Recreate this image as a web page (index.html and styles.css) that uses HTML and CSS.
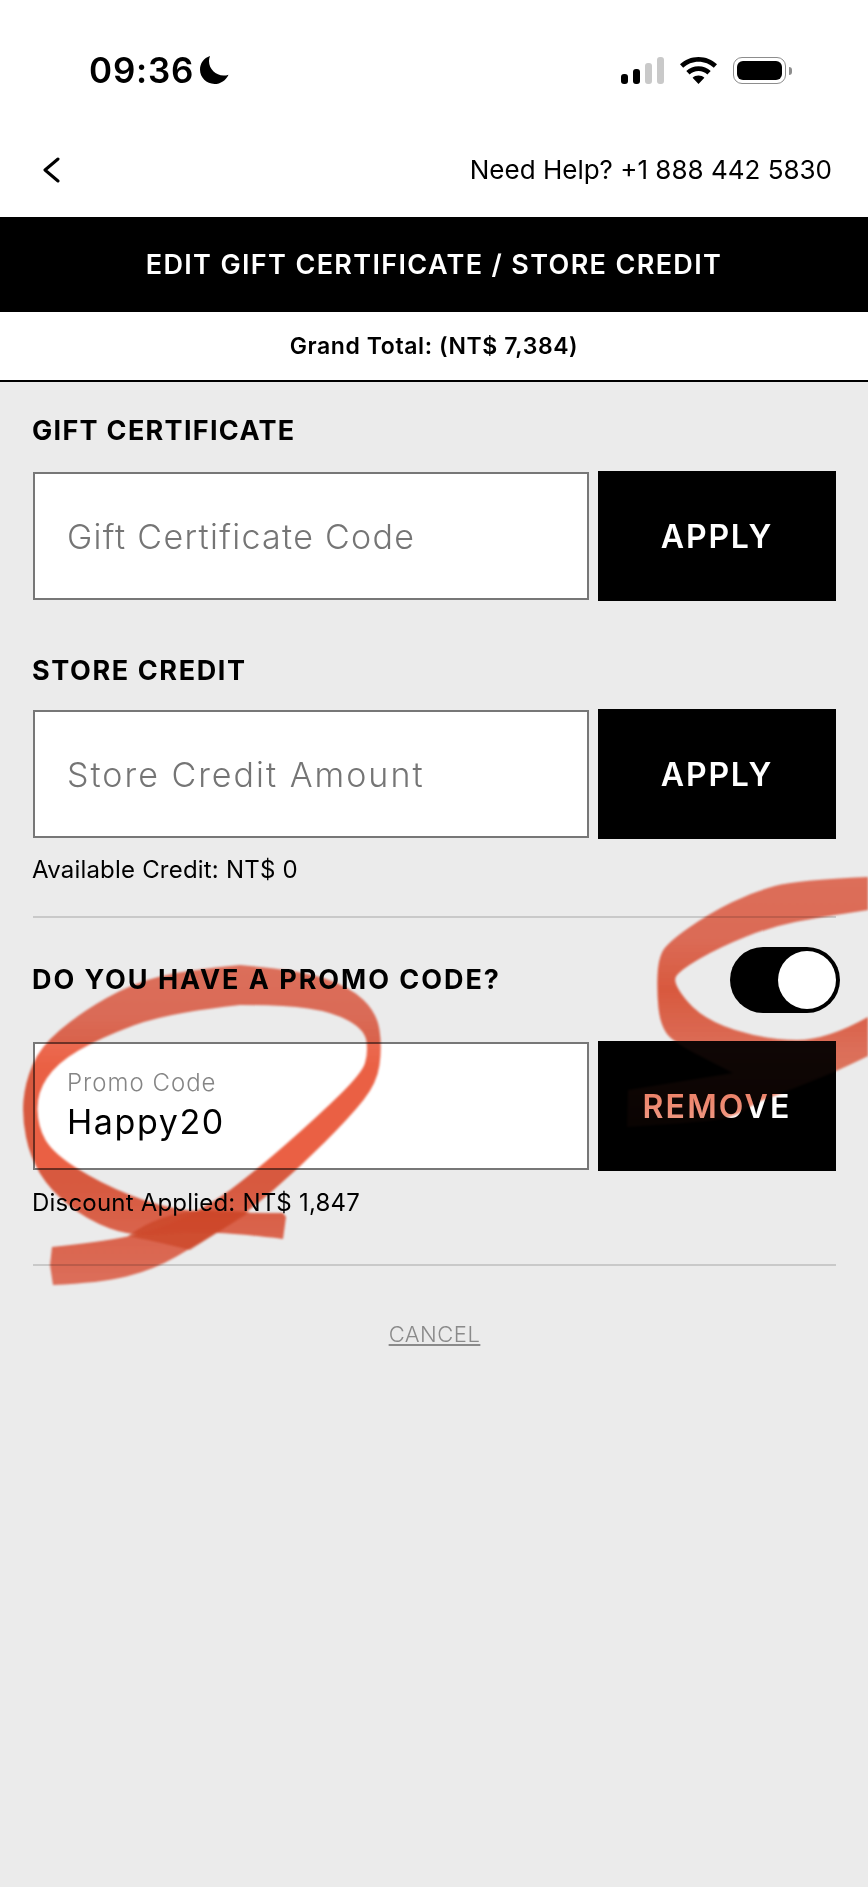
FILE: index.html
```html
<!DOCTYPE html>
<html lang="en">
<head>
  <meta charset="UTF-8" />
  <meta name="viewport" content="width=device-width, initial-scale=1.0"/>
  <title>Edit Gift Certificate / Store Credit</title>
  <link rel="stylesheet" href="styles.css">
</head>
<body>
  <div class="page">
    <div class="status-bar">
      <div class="status-left">
        <span class="clock">09:36</span>
        <svg class="moon" width="29" height="28" viewBox="0 0 29 28"><path d="M10 0C3.800 2 0 7.400 0 13.600 0 21.600 6.500 28 14.500 28c6 0 11.500-3.600 14-9.300-1.600.6-3.200.9-4.900.9C15.700 19.600 9 13.100 9 5.100 9 3.300 9.400 1.600 10 0Z"/></svg>
      </div>
      <div class="status-right">
        <div class="signal">
          <span class="bar bar-1"></span>
          <span class="bar bar-2"></span>
          <span class="bar bar-3"></span>
          <span class="bar bar-4"></span>
        </div>
        <svg class="wifi" width="37" height="27" viewBox="0 0 37 27"><path d="M18.500 0C11.300 0 4.900 2.800 0 7.300l3.200 3.500C7.200 7.100 12.600 4.800 18.500 4.800s11.300 2.300 15.300 6L37 7.300C32.100 2.800 25.700 0 18.500 0Zm0 9.200c-4.700 0-9 1.800-12.200 4.800l3.300 3.500c2.300-2.200 5.400-3.500 8.900-3.500s6.600 1.300 8.900 3.500l3.300-3.500c-3.200-3-7.500-4.800-12.200-4.800Zm0 9.300c-2.300 0-4.400.9-5.900 2.300l5.900 6.200 5.900-6.200c-1.500-1.400-3.600-2.300-5.900-2.300Z"/></svg>
        <div class="battery">
          <div class="battery-shell"><span class="battery-level"></span></div>
          <span class="battery-nub"></span>
        </div>
      </div>
    </div>

    <div class="nav-row">
      <svg class="back" width="18" height="26" viewBox="0 0 18 26"><path d="M16 2 3 13l13 11" fill="none" stroke="#000" stroke-width="3" stroke-linecap="round" stroke-linejoin="round"/></svg>
      <span class="help">Need Help? +1 888 442 5830</span>
    </div>

    <h1 class="page-title">EDIT GIFT CERTIFICATE / STORE CREDIT</h1>
    <div class="grand-total">Grand Total: (NT$ 7,384)</div>

    <div class="content">
      <h2 class="section-label">GIFT CERTIFICATE</h2>
      <div class="field-row">
        <div class="field"><span class="placeholder">Gift Certificate Code</span></div>
        <button class="action">APPLY</button>
      </div>

      <h2 class="section-label second">STORE CREDIT</h2>
      <div class="field-row">
        <div class="field"><span class="placeholder wide">Store Credit Amount</span></div>
        <button class="action">APPLY</button>
      </div>
      <p class="note credit-note">Available Credit: NT$ 0</p>
      <hr class="rule first-rule">

      <div class="promo-head">
        <h2 class="section-label promo-label">DO YOU HAVE A PROMO CODE?</h2>
        <div class="toggle"><span class="knob"></span></div>
      </div>
      <div class="field-row promo-row">
        <div class="field filled">
          <span class="float-label">Promo Code</span>
          <span class="value">Happy20</span>
        </div>
        <button class="action remove">REMOVE</button>
      </div>
      <p class="note discount-note">Discount Applied: NT$ 1,847</p>
      <hr class="rule last-rule">

      <a class="cancel" href="#">CANCEL</a>
    </div>

    <!-- red marker scribbles drawn over the screenshot -->
    <svg class="marks" viewBox="0 0 868 1887">
      <defs>
        <linearGradient id="ink-left" gradientUnits="userSpaceOnUse" x1="0" y1="965" x2="0" y2="1285">
          <stop offset="0" stop-color="#ee6c54" stop-opacity="0.92"/>
          <stop offset="0.16" stop-color="#ec6850" stop-opacity="0.92"/>
          <stop offset="0.32" stop-color="#e9583a" stop-opacity="0.95"/>
          <stop offset="0.68" stop-color="#e9583a" stop-opacity="0.95"/>
          <stop offset="1" stop-color="#ee6c54" stop-opacity="0.92"/>
        </linearGradient>
        <linearGradient id="ink-right" gradientUnits="userSpaceOnUse" x1="0" y1="877" x2="0" y2="1127">
          <stop offset="0" stop-color="#ee6c54" stop-opacity="0.92"/>
          <stop offset="0.25" stop-color="#ec6850" stop-opacity="0.92"/>
          <stop offset="0.45" stop-color="#e9583a" stop-opacity="0.95"/>
          <stop offset="0.7" stop-color="#ec6a50" stop-opacity="0.9"/>
          <stop offset="0.88" stop-color="#e8603f" stop-opacity="0.75"/>
          <stop offset="1" stop-color="#e8603f" stop-opacity="0.6"/>
        </linearGradient>
      </defs>
      <path id="loop-a" d="M52 1247Q100 1242 125 1237Q150 1232 178.500 1219.500Q207 1207 230 1190Q253 1173 285 1145Q317 1117 339.500 1095Q362 1073 365 1063Q368 1053 366.500 1041.500Q365 1030 349 1021Q333 1012 308 1008.500Q283 1005 240 1005L240 965Q300 970 325 978.500Q350 987 363.500 1000Q377 1013 379.500 1030Q382 1047 379.500 1065Q377 1083 363.500 1100Q350 1117 325 1142Q300 1167 273.500 1190Q247 1213 223.500 1228Q200 1243 176.500 1256.500Q153 1270 126.500 1276.500Q100 1283 53 1285L50 1265Z"/>
      <path id="loop-b" d="M240 965Q187 970 160 976.500Q133 983 106.500 998Q80 1013 60 1030Q40 1047 32.500 1065Q25 1083 23.500 1100Q22 1117 26 1137Q30 1157 40 1173.500Q50 1190 68.500 1205Q87 1220 110 1228.500Q133 1237 160 1234.500Q187 1232 210 1232.500Q233 1233 283 1239L286 1217L283 1213Q213 1213 186.500 1210Q160 1207 130 1195Q100 1183 76.500 1168Q53 1153 45.500 1140Q38 1127 37.500 1110Q37 1093 47 1078Q57 1063 78.500 1050.500Q100 1038 133.500 1025.500Q167 1013 240 1005Z"/>
      <path id="loop-c" d="M868 877Q797 880 775 886Q753 892 731.500 902.500Q710 913 688.500 928Q667 943 662.500 951.500Q658 960 657.500 976.500Q657 993 658.500 1008Q660 1023 666 1032.500Q672 1042 702 1057L733 1073L628 1090L627 1127Q690 1123 711 1120.500Q733 1118 745 1110Q757 1102 767 1098.500Q777 1095 787 1091Q797 1087 816 1079.500Q835 1072 868 1056L868 1017Q827 1040 797 1040Q767 1040 735 1030Q703 1020 687.500 1001.500Q672 983 676 976.500Q680 970 700 958.500Q720 947 745 937Q770 927 795 922Q820 917 868 910Z"/>
      <path class="crossing" d="M128 1236Q160 1212 207 1210L250 1212Q225 1228 190 1250Q150 1240 128 1236Z"/>
    </svg>
    <svg class="marks-tint" viewBox="0 0 868 1887">
      <use href="#loop-c"/>
    </svg>
  </div>
</body>
</html>
```

FILE: styles.css
```css
* {
  box-sizing: border-box;
}

body {
  margin: 0;
  font-family: Inter, "Liberation Sans", sans-serif;
  color: #000;
  background-color: #ebebeb;
}

.page {
  position: relative;
  width: 868px;
  height: 1887px;
  overflow: hidden;
  background-color: #ebebeb;
}

/* status bar */
.status-bar {
  display: flex;
  justify-content: space-between;
  align-items: flex-start;
  height: 140px;
  padding: 56px 76px 0 89px;
  background-color: #fff;
}

.status-left {
  display: flex;
  align-items: center;
  gap: 6px;
  height: 28px;
}

.clock {
  font-size: 35px;
  font-weight: 600;
  line-height: 28px;
  letter-spacing: 0.8px;
}

.status-right {
  display: flex;
  align-items: flex-end;
  gap: 16px;
  height: 28px;
}

.signal {
  display: flex;
  align-items: flex-end;
  gap: 5px;
  height: 27px;
}

.bar {
  width: 7px;
  border-radius: 3px;
  background-color: #000;
}

.bar-1 { height: 10px; }
.bar-2 { height: 15px; }
.bar-3 { height: 21px; background-color: #c9c9c9; }
.bar-4 { height: 27px; background-color: #c9c9c9; }

.battery {
  display: flex;
  align-items: center;
  gap: 3px;
}

.battery-shell {
  width: 53px;
  height: 27px;
  padding: 3px;
  border: 1.500px solid #8d8d8d;
  border-radius: 9px;
}

.battery-level {
  display: block;
  height: 100%;
  border-radius: 6px;
  background-color: #000;
}

.battery-nub {
  width: 3px;
  height: 8px;
  border-radius: 0 3px 3px 0;
  background-color: #8d8d8d;
}

/* back + help */
.nav-row {
  display: flex;
  justify-content: space-between;
  align-items: center;
  height: 77px;
  padding: 0 36px 18px 42px;
  background-color: #fff;
}

.help {
  font-size: 26px;
}

.page-title {
  display: flex;
  justify-content: center;
  align-items: center;
  height: 95px;
  margin: 0;
  font-size: 27px;
  font-weight: 600;
  letter-spacing: 1.35px;
  color: #fff;
  background-color: #000;
}

.grand-total {
  display: flex;
  justify-content: center;
  align-items: center;
  height: 70px;
  font-size: 23px;
  font-weight: 600;
  letter-spacing: 0.6px;
  background-color: #fff;
  border-bottom: 2px solid #000;
}

/* form */
.content {
  display: flex;
  flex-direction: column;
  padding: 29px 32px 0 33px;
}

.section-label {
  height: 40px;
  margin: 0 0 20px -1px;
  font-size: 27px;
  line-height: 40px;
  font-weight: 700;
  letter-spacing: 1.3px;
}

.section-label.second {
  margin-top: 50px;
  margin-bottom: 18px;
  letter-spacing: 1.6px;
}

.field-row {
  display: grid;
  grid-template-columns: 556px 238px;
  column-gap: 9px;
  align-items: center;
  height: 130px;
}

.field {
  display: flex;
  flex-direction: column;
  justify-content: center;
  height: 128px;
  padding-left: 32px;
  background-color: #fff;
  border: 2px solid #777;
}

.placeholder {
  font-size: 34px;
  font-weight: 300;
  letter-spacing: 1.3px;
  color: #757575;
}

.placeholder.wide {
  letter-spacing: 2px;
}

.float-label {
  margin-top: -2px;
  font-size: 24px;
  font-weight: 300;
  letter-spacing: 1px;
  color: #858585;
}

.value {
  margin-top: 4px;
  font-size: 34px;
  font-weight: 400;
  letter-spacing: 1.6px;
}

.action {
  height: 130px;
  padding: 0;
  border: 0;
  font-family: inherit;
  font-size: 32px;
  font-weight: 600;
  letter-spacing: 1.8px;
  color: #fff;
  background-color: #000;
}

.action.remove {
  letter-spacing: 2.2px;
}

.note {
  height: 30px;
  margin: 16px 0 0 -1px;
  font-size: 24px;
  line-height: 30px;
  letter-spacing: 0.2px;
}

.rule {
  width: 100%;
  height: 2px;
  margin: 31px 0 0;
  border: 0;
  background-color: #c9c9c9;
}

.promo-head {
  display: flex;
  justify-content: space-between;
  align-items: center;
  margin-top: 29px;
}

.section-label.promo-label {
  margin-bottom: 0;
  letter-spacing: 1.95px;
}

.toggle {
  display: flex;
  justify-content: flex-end;
  width: 110px;
  height: 66px;
  margin-right: -4px;
  padding: 4px;
  border-radius: 33px;
  background-color: #000;
}

.knob {
  width: 58px;
  height: 58px;
  border-radius: 50%;
  background-color: #fff;
}

.promo-row {
  margin-top: 28px;
}

.note.discount-note {
  margin-top: 17px;
}

.rule.last-rule {
  margin-top: 46px;
}

.cancel {
  align-self: center;
  margin-top: 53px;
  font-size: 22px;
  line-height: 30px;
  font-weight: 300;
  letter-spacing: 0.5px;
  color: #8a8a8a;
}

/* marker overlay */
.marks,
.marks-tint {
  position: absolute;
  top: 0;
  left: 0;
  width: 868px;
  height: 1887px;
  pointer-events: none;
  filter: blur(1.2px);
}

.marks {
  mix-blend-mode: multiply;
}

#loop-a,
#loop-b {
  fill: url(#ink-left);
}

#loop-c {
  fill: url(#ink-right);
}

.crossing {
  fill: #d8431f;
  fill-opacity: 0.6;
}

.marks-tint {
  opacity: 0.07;
}
```
